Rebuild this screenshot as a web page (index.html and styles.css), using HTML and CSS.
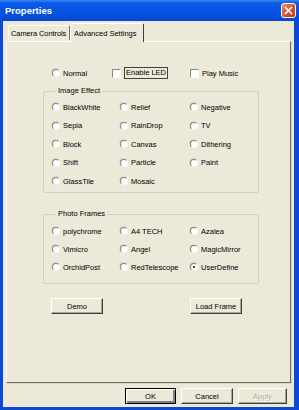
FILE: index.html
```html
<!DOCTYPE html>
<html lang="en">
<head>
  <meta charset="UTF-8" />
  <title>Properties</title>
  <link rel="stylesheet" href="styles.css">
</head>
<body>

  <div class="window">

    <!-- Title bar -->
    <div class="titlebar">
      <span class="title">Properties</span>
      <span class="close">
        <svg width="9" height="9" viewBox="0 0 9 9"><path d="M1.5 1.5 L7.5 7.5 M7.5 1.5 L1.5 7.5" stroke="#fff" stroke-width="1.6" stroke-linecap="square"/></svg>
      </span>
    </div>

    <div class="client">

      <!-- Tabs -->
      <div class="tabs">
        <div class="tab">Camera Controls</div>
        <div class="tab active">Advanced Settings</div>
      </div>

      <div class="panel">

        <div class="toprow">
          <label class="opt w-normal"><span class="radio"></span>Normal</label>
          <label class="opt w-led"><span class="check"></span><span class="focus">Enable LED</span></label>
          <label class="opt"><span class="check"></span>Play Music</label>
        </div>

        <fieldset class="group effects">
          <legend>Image Effect</legend>
          <div class="grid">
            <label class="opt"><span class="radio"></span>BlackWhite</label>
            <label class="opt"><span class="radio"></span>Relief</label>
            <label class="opt"><span class="radio"></span>Negative</label>
            <label class="opt"><span class="radio"></span>Sepia</label>
            <label class="opt"><span class="radio"></span>RainDrop</label>
            <label class="opt"><span class="radio"></span>TV</label>
            <label class="opt"><span class="radio"></span>Block</label>
            <label class="opt"><span class="radio"></span>Canvas</label>
            <label class="opt"><span class="radio"></span>Dithering</label>
            <label class="opt"><span class="radio"></span>Shift</label>
            <label class="opt"><span class="radio"></span>Particle</label>
            <label class="opt"><span class="radio"></span>Paint</label>
            <label class="opt"><span class="radio"></span>GlassTile</label>
            <label class="opt"><span class="radio"></span>Mosaic</label>
          </div>
        </fieldset>

        <fieldset class="group frames">
          <legend>Photo Frames</legend>
          <div class="grid">
            <label class="opt"><span class="radio"></span>polychrome</label>
            <label class="opt"><span class="radio"></span>A4 TECH</label>
            <label class="opt"><span class="radio"></span>Azalea</label>
            <label class="opt"><span class="radio"></span>Vimicro</label>
            <label class="opt"><span class="radio"></span>Angel</label>
            <label class="opt"><span class="radio"></span>MagicMirror</label>
            <label class="opt"><span class="radio"></span>OrchidPost</label>
            <label class="opt"><span class="radio"></span>RedTelescope</label>
            <label class="opt"><span class="radio on"></span>UserDefine</label>
          </div>
        </fieldset>

        <div class="actions">
          <button class="btn">Demo</button>
          <button class="btn">Load Frame</button>
        </div>

      </div>

      <!-- Dialog buttons -->
      <div class="footer">
        <button class="btn default">OK</button>
        <button class="btn">Cancel</button>
        <button class="btn" disabled>Apply</button>
      </div>

    </div>
  </div>

</body>
</html>
```

FILE: styles.css
```css
body {
  margin: 0;
  padding: 0;
  font-family: 'Liberation Sans', Arial, sans-serif;
  font-size: 7.5px;
  color: #000;
}

.window {
  width: 299px;
  height: 410px;
  box-sizing: border-box;
  background: #0a48d8;
  display: flex;
  flex-direction: column;
}

/* Title bar */
.titlebar {
  height: 21px;
  flex: none;
  display: flex;
  align-items: center;
  justify-content: space-between;
  padding: 0 3px 0 5px;
  background: linear-gradient(#3b86f2 0, #0b5ae6 3px, #0754e2 55%, #0448d4 100%);
}

.title {
  color: #fff;
  font-weight: bold;
  font-size: 9.5px;
  margin-top: -1px;
}

.close {
  width: 13px;
  height: 13px;
  border: 1px solid #fff;
  border-radius: 3px;
  background: linear-gradient(135deg, #f08a68, #d8482a 60%, #c23a1c);
  display: flex;
  justify-content: center;
  align-items: center;
}

.client {
  flex: 1;
  margin: 0 5px 3px 3px;
  background: #ece9d8;
  padding: 2px 3px 0 3px;
}

/* Tabs */
.tabs {
  display: flex;
  align-items: flex-end;
  height: 18px;
  padding-left: 2px;
  position: relative;
  z-index: 1;
}

.tab {
  height: 15px;
  box-sizing: border-box;
  padding: 3px 0 0 2px;
  border: 1px solid #fff;
  border-right-color: #716f64;
  border-bottom: none;
  border-radius: 2px 2px 0 0;
  background: #ece9d8;
  width: 62px;
  margin-bottom: 1px;
  white-space: nowrap;
  letter-spacing: -0.1px;
}

.tab.active {
  height: 19px;
  width: 74px;
  padding: 5px 0 0 3px;
  margin-bottom: -1px;
  border-right: 1px solid #404040;
  letter-spacing: 0;
}

/* Tab page */
.panel {
  height: 342px;
  box-sizing: border-box;
  border: 1px solid #fff;
  border-right-color: #716f64;
  border-bottom-color: #716f64;
  box-shadow: 1px 1px 0 #d8d5c6;
  padding-top: 25px;
}

.toprow {
  display: flex;
  padding-left: 45px;
}

.opt {
  display: flex;
  align-items: center;
  height: 12px;
  gap: 3px;
  white-space: nowrap;
}

.w-normal { width: 60px; }
.w-led { width: 78px; }

.radio {
  width: 6px;
  height: 6px;
  border-radius: 50%;
  border: 1px solid;
  border-color: #8a887c #f8f8f4 #f8f8f4 #8a887c;
  background: #fff;
  box-shadow: -0.5px -0.5px 0 #c8c6b8;
  display: flex;
  justify-content: center;
  align-items: center;
  flex: none;
}

.radio.on::before {
  content: '';
  width: 2.5px;
  height: 2.5px;
  border-radius: 50%;
  background: #000;
}

.check {
  width: 7px;
  height: 7px;
  border: 1px solid;
  border-color: #8a887c #fff #fff #8a887c;
  background: #fff;
  flex: none;
}

.focus {
  border: 1px solid #404040;
  padding: 1px 1px;
  line-height: 8px;
}

/* Group boxes */
.group {
  margin: 0 0 0 36px;
  width: 216px;
  box-sizing: border-box;
  border: 1px solid #d0d0bf;
  border-radius: 2px;
  padding: 5px 0 5px 8px;
}

.group legend {
  padding: 0 2px;
  margin-left: 4px;
  line-height: 10px;
}

.effects {
  margin-top: 7px;
}

.frames {
  margin-top: 16px;
  padding-top: 6px;
  padding-bottom: 10px;
}

.grid {
  display: grid;
  grid-template-columns: 68px 70px auto;
  grid-auto-rows: 12px;
  row-gap: 6.5px;
}

.frames .grid {
  row-gap: 6px;
}

/* Buttons */
.btn {
  font-family: inherit;
  font-size: 7.5px;
  color: #000;
  height: 16px;
  width: 52px;
  padding: 0;
  background: #ece9d8;
  border: 1px solid;
  border-color: #fff #404040 #404040 #fff;
  box-shadow: inset -1px -1px 0 #aca899;
}

.btn.default {
  width: 51px;
  border-color: #000;
  box-shadow: inset 1px 1px 0 #fff, inset -2px -2px 0 #808080;
}

.btn:disabled {
  color: #aca899;
  text-shadow: 1px 1px 0 #fff;
  width: 49px;
}

.actions {
  display: flex;
  gap: 87px;
  margin: 14px 0 0 44px;
}

.footer {
  display: flex;
  justify-content: flex-end;
  gap: 5px;
  padding: 5px 4px 0 0;
}
```
